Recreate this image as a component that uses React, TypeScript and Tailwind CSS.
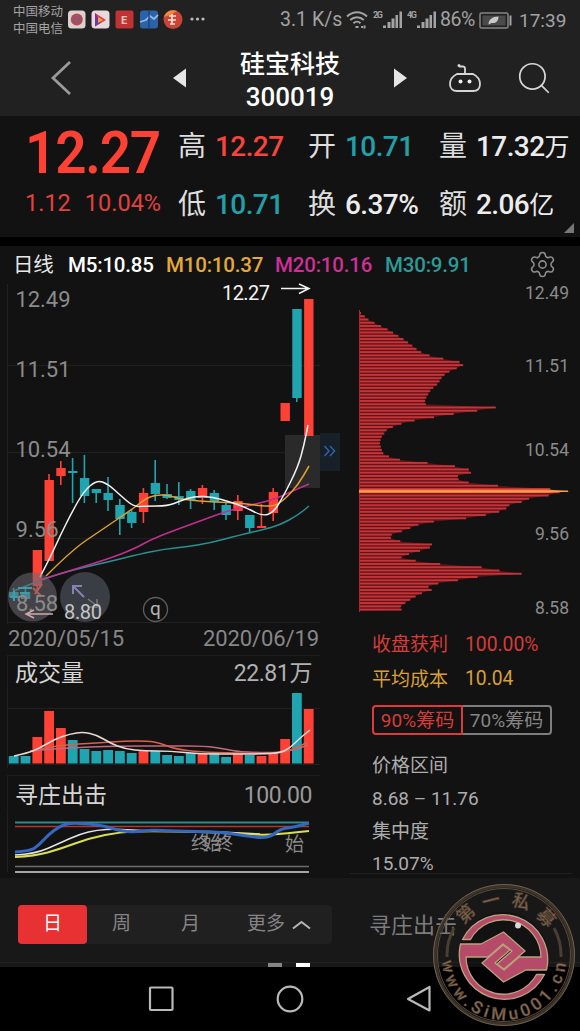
import { Search, Settings } from "lucide-react";

type Point = [number, number];

type Candle = {
    up: boolean;
    high: number;
    top: number;
    bottom: number;
    low: number;
    volume: number;
};

const RED = "#fd4135";
const TEAL = "#20a5b0";

const candles: Candle[] = [
    { up: false, high: 588, top: 592, bottom: 597, low: 600, volume: 756 },
    { up: false, high: 586, top: 592, bottom: 599, low: 602, volume: 756 },
    { up: true, high: 550, top: 550, bottom: 586, low: 590, volume: 737 },
    { up: true, high: 474, top: 480, bottom: 561, low: 561, volume: 711 },
    { up: true, high: 461, top: 468, bottom: 476, low: 485, volume: 728 },
    { up: false, high: 458, top: 471, bottom: 473, low: 503, volume: 740 },
    { up: false, high: 455, top: 478, bottom: 496, low: 503, volume: 749 },
    { up: false, high: 489, top: 489, bottom: 493, low: 503, volume: 751 },
    { up: false, high: 477, top: 493, bottom: 500, low: 511, volume: 750 },
    { up: false, high: 499, top: 505, bottom: 519, low: 535, volume: 751 },
    { up: false, high: 510, top: 512, bottom: 523, low: 528, volume: 753 },
    { up: true, high: 488, top: 493, bottom: 512, low: 523, volume: 751 },
    { up: false, high: 460, top: 483, bottom: 494, low: 501, volume: 751 },
    { up: false, high: 484, top: 494, bottom: 498, low: 499, volume: 755 },
    { up: false, high: 482, top: 496, bottom: 500, low: 505, volume: 756 },
    { up: false, high: 489, top: 491, bottom: 500, low: 509, volume: 753 },
    { up: true, high: 485, top: 488, bottom: 498, low: 504, volume: 754 },
    { up: false, high: 490, top: 493, bottom: 502, low: 510, volume: 753 },
    { up: false, high: 503, top: 505, bottom: 515, low: 520, volume: 757 },
    { up: true, high: 495, top: 501, bottom: 511, low: 520, volume: 753 },
    { up: false, high: 515, top: 515, bottom: 528, low: 532, volume: 755 },
    { up: true, high: 504, top: 526, bottom: 528, low: 528, volume: 756 },
    { up: true, high: 488, top: 492, bottom: 513, low: 521, volume: 752 },
    { up: true, high: 403, top: 403, bottom: 421, low: 421, volume: 739 },
    { up: false, high: 309, top: 309, bottom: 398, low: 402, volume: 693 },
    { up: true, high: 299, top: 299, bottom: 436, low: 436, volume: 709 },
];

const ma5: Point[] = [[40, 577], [50, 558], [60, 536], [72, 512], [84, 491], [97, 480], [108, 484], [120, 495], [134, 507], [145, 506], [168, 506], [180, 501], [195, 496], [213, 497], [230, 502], [245, 507], [262, 516], [273, 513], [283, 497], [298, 467], [304, 445], [308, 425]];
const ma10: Point[] = [[46, 576], [72, 550], [100, 531], [134, 508], [145, 499], [155, 495], [168, 495], [180, 499], [200, 501], [215, 502], [240, 503], [262, 506], [275, 506], [285, 499], [298, 485], [309, 466]];
const ma20: Point[] = [[40, 580], [72, 570], [108, 559], [134, 549], [150, 540], [170, 532], [200, 521], [230, 510], [260, 503], [275, 499], [295, 490], [309, 484]];
const ma30: Point[] = [[14, 591], [40, 580], [72, 570], [108, 562], [140, 554], [165, 549], [185, 547], [210, 543], [240, 535], [262, 530], [280, 525], [298, 515], [309, 506]];

const volWhite: Point[] = [[14, 756], [28, 753], [40, 748], [55, 739], [70, 734], [83, 732], [97, 735], [110, 743], [125, 749], [145, 751], [170, 751], [200, 754], [235, 754], [260, 754], [280, 753], [290, 748], [300, 738], [310, 730]];
const volOrange: Point[] = [[40, 749], [60, 745], [97, 743], [125, 741], [148, 741], [160, 743], [175, 749], [200, 752], [235, 753], [270, 754], [290, 751], [308, 742]];
const volPink: Point[] = [[30, 751], [60, 748], [120, 746], [170, 746], [205, 746], [225, 749], [240, 752], [280, 753], [300, 748], [308, 745]];

const indBlue: Point[] = [[15, 852], [30, 851], [38, 846], [48, 835], [60, 826], [70, 823], [90, 824], [105, 826], [120, 831], [135, 832], [150, 830], [175, 831], [220, 832], [240, 835], [262, 838], [272, 836], [280, 829], [295, 827], [309, 823]];
const indWhite: Point[] = [[15, 855], [35, 854], [60, 843], [80, 834], [97, 830], [115, 829], [150, 831], [200, 831], [260, 834]];
const indYellow: Point[] = [[15, 857], [35, 856], [60, 849], [90, 838], [120, 832], [150, 831], [200, 832], [225, 833], [260, 835], [280, 834], [309, 831]];

// [price axis y, right end of the chip bar]
const chipProfile: Point[] = [[313, 361], [320, 369], [330, 389], [340, 405], [350, 418], [354, 424], [358, 440], [362, 460], [366, 464], [370, 452], [376, 443], [384, 438], [390, 431], [400, 425], [405, 426], [407.500, 496], [411, 476], [414, 454], [418, 430], [421, 412], [425, 397], [430, 387], [438, 381], [444, 380], [453, 383], [457, 390], [460, 401], [463, 428], [466, 454], [470, 471], [473, 471], [476, 458], [479, 458], [482, 464], [486, 500], [490, 566], [495, 552], [499, 528], [502, 522], [506, 507], [510, 506], [513, 495], [516, 482], [519, 462], [522, 430], [526, 414], [530, 407], [534, 392], [538, 391], [541, 398], [544, 432], [547, 432], [551, 420], [556, 403], [558, 401], [561, 417], [564, 440], [567, 480], [571, 502], [574, 523], [577, 478], [580, 460], [583, 440], [587, 428], [590, 432], [594, 420], [600, 410], [606, 401], [612, 402]];

function chipEnd(y: number) {
    for (let i = 1; i < chipProfile.length; i++) {
        const [y0, x0] = chipProfile[i - 1];
        const [y1, x1] = chipProfile[i];
        if (y <= y1) return x0 + ((x1 - x0) * (y - y0)) / (y1 - y0);
    }
    return chipProfile[chipProfile.length - 1][1];
}

const chipRows = Array.from({ length: 92 }, (_, i) => 313 + i * 3.26);

const candleX = (i: number) => 13.6 + i * 11.8;

function smooth(points: Point[]) {
    let d = `M${points[0][0]} ${points[0][1]}`;
    for (let i = 1; i < points.length - 1; i++) {
        const [x, y] = points[i];
        const [nx, ny] = points[i + 1];
        d += ` Q${x} ${y} ${(x + nx) / 2} ${(y + ny) / 2}`;
    }
    const last = points[points.length - 1];
    return `${d} L${last[0]} ${last[1]}`;
}

function Curve({ points, color, width = 1.5 }: { points: Point[]; color: string; width?: number }) {
    return <path d={smooth(points)} fill="none" stroke={color} strokeWidth={width} strokeLinejoin="round" />;
}

function Signal({ label }: { label: string }) {
    return (
        <svg width="31" height="22" viewBox="0 0 31 22" fill="#a3a3a3">
            <text x="0" y="8.5" fontSize="9" fontWeight="700" textLength="10">
                {label}
            </text>
            <rect x="10" y="16.5" width="3" height="2.5" />
            <rect x="14.5" y="13" width="3" height="6" />
            <rect x="18.5" y="9.5" width="3" height="9.5" />
            <rect x="22.5" y="6" width="2.5" height="13" />
            <rect x="26.5" y="2.5" width="2.5" height="16.5" />
        </svg>
    );
}

function AppIcons() {
    return (
        <svg width="139" height="20" viewBox="67 10 139 20" className="ml-1">
            <rect x="68" y="10.5" width="17.5" height="18" rx="3.5" fill="#ddd0d0" />
            <circle cx="76.8" cy="19.5" r="6" fill="#b94a50" />
            <path d="M72 20c3-5 5 3 10-2M74 15v8M79 15v9" stroke="#7b5a80" strokeWidth="1.3" fill="none" />
            <rect x="91.5" y="10.5" width="18" height="18" rx="3.5" fill="#e8d9dd" />
            <path d="M95 13l11 7-11 6.5z" fill="#e23d4a" />
            <path d="M95 13v13.5l6-4z" fill="#6a3aa0" />
            <path d="M98 17l5 3-5 3z" fill="#f0a53a" />
            <rect x="115.500" y="10.5" width="18" height="18" rx="2" fill="#c03234" />
            <text x="121" y="24" fontSize="11" fontWeight="700" fill="#efc8b8">
                E
            </text>
            <rect x="140" y="10.5" width="18" height="18" rx="3" fill="#2b62a8" />
            <path d="M140 22l6-2 4-4 4 3 4-4" stroke="#8fb7e8" strokeWidth="1.8" fill="none" />
            <path d="M149 11v17" stroke="#1d4684" strokeWidth="1.500" />
            <circle cx="173" cy="19.5" r="9.5" fill="#cc4338" />
            <path d="M164 17a9.500 9.500 0 0 1 13-6l-5 3z" fill="#ee8d3c" />
            <path d="M169 16h7M168 20h8M170 24h5M172 14v10" stroke="#f5e3d8" strokeWidth="1.700" fill="none" />
            <circle cx="192" cy="19" r="1.600" fill="#bcbcbc" />
            <circle cx="197.500" cy="19" r="1.600" fill="#bcbcbc" />
            <circle cx="203" cy="19" r="1.600" fill="#bcbcbc" />
        </svg>
    );
}

function StatusBar() {
    return (
        <div className="flex h-10 items-center pl-[13px] text-[#a3a3a3]">
            <div className="flex w-[50px] flex-col whitespace-nowrap text-[12.5px] leading-[17px]">
                <span>中国移动</span>
                <span>中国电信</span>
            </div>
            <AppIcons />
            <span className="ml-[74px] w-[66px] whitespace-nowrap text-[19.5px] leading-none">3.1 K/s</span>
            <svg width="22" height="18" viewBox="0 0 22 18" fill="none" stroke="#a3a3a3" strokeWidth="2">
                <path d="M1 5.500C7-.2 15-.2 21 5.500M4.200 9c4-3.800 9.600-3.800 13.600 0M7.500 12.300c2-2 5-2 7 0" />
                <path d="M9.500 16h3M15 16h2M18.500 14.500v3" />
            </svg>
            <div className="ml-[5px] flex gap-[3px]">
                <Signal label="2G" />
                <Signal label="4G" />
            </div>
            <span className="ml-[2px] w-[39px] whitespace-nowrap text-[19.5px] leading-none tracking-[-0.5px]">86%</span>
            <svg width="34" height="17" viewBox="0 0 34 17" fill="none" className="shrink-0">
                <rect x="1" y="1" width="28" height="15" rx="1.500" stroke="#858585" strokeWidth="1.500" />
                <rect x="3.500" y="3.500" width="23" height="10" fill="#4a4a4a" />
                <path d="M9.500 12.500c0-5 4-8 10-8 0 5-3 7-7 6.500z" fill="#c9c9c9" />
                <path d="M31.500 3.500v10" stroke="#a3a3a3" strokeWidth="2" />
            </svg>
            <span className="ml-[6px] whitespace-nowrap text-[19px] leading-none">17:39</span>
        </div>
    );
}

function TitleBar() {
    return (
        <div className="flex h-[76px] items-center justify-between pl-[50px] pr-[27px]">
            <div className="flex items-center gap-[101px]">
                <svg width="22" height="36" viewBox="0 0 22 36" fill="none" stroke="#9a9a9a" strokeWidth="2.800">
                    <path d="M20 2L3 18l17 16" />
                </svg>
                <svg width="14" height="20" viewBox="0 0 14 20" fill="#e6e6e6">
                    <path d="M0 10L13 0.500v19z" />
                </svg>
            </div>
            <div className="flex flex-col items-center gap-[7px] pt-[5px] font-medium leading-none text-white">
                <span className="text-[25px]">硅宝科技</span>
                <span className="text-[26px]">300019</span>
            </div>
            <div className="flex items-center">
                <svg width="14" height="20" viewBox="0 0 14 20" fill="#e6e6e6">
                    <path d="M14 10L1 0.500v19z" />
                </svg>
                <svg width="34" height="30" viewBox="0 0 34 30" fill="none" stroke="#d6d6d6" strokeWidth="1.800" className="ml-[41px]">
                    <path d="M9 11h16c4 2 7 6 7 10 0 5-3 7-7 7H9c-4 0-7-2-7-7 0-4 3-8 7-10z" />
                    <path d="M17 11V5.500c0-1.500-1-2-2-2h-4" />
                    <circle cx="11" cy="2.500" r="1.500" fill="#d6d6d6" stroke="none" />
                    <circle cx="12.500" cy="18.500" r="2" fill="#f0f0f0" stroke="none" />
                    <circle cx="21.500" cy="18.500" r="2" fill="#f0f0f0" stroke="none" />
                </svg>
                <Search className="ml-[33px] size-[38px] text-[#d6d6d6]" strokeWidth={1.1} />
            </div>
        </div>
    );
}

const quotes = [
    { label: "高", value: "12.27", tone: "text-[#f5453d]" },
    { label: "开", value: "10.71", tone: "text-[#22a0aa]" },
    { label: "量", value: "17.32", unit: "万", tone: "text-[#ececec]" },
    { label: "低", value: "10.71", tone: "text-[#22a0aa]" },
    { label: "换", value: "6.37%", tone: "text-[#ececec]" },
    { label: "额", value: "2.06", unit: "亿", tone: "text-[#ececec]" },
];

function QuotePanel() {
    return (
        <div className="flex h-[121px] bg-[#121212] pt-[2px]">
            <div className="flex w-[178px] flex-col pl-[25px] text-[#fd4135]">
                <div className="flex h-[68px] items-center">
                    <span className="origin-left scale-x-[0.93] text-[59px] font-semibold leading-none tracking-[-1.3px]">12.27</span>
                </div>
                <div className="flex h-[36px] items-center gap-[14px] whitespace-nowrap text-[23.5px] leading-none text-[#e0433f]">
                    <span>1.12</span>
                    <span>10.04%</span>
                </div>
            </div>
            <div className="grid h-[116px] grid-cols-[130px_131px_141px] grid-rows-2">
                {quotes.map((q) => (
                    <div key={q.label} className="flex items-center gap-[9px] whitespace-nowrap leading-none">
                        <span className="text-[28px] text-[#dedede]">{q.label}</span>
                        <span className={`${q.tone} text-[28px] font-medium tracking-[-0.6px]`}>
                            {q.value}
                            {q.unit && <span className="text-[25px] font-normal">{q.unit}</span>}
                        </span>
                    </div>
                ))}
            </div>
            <svg width="10" height="10" viewBox="0 0 10 10" className="-ml-[16px] mb-[4px] self-end" fill="#777">
                <path d="M10 0v10H0z" />
            </svg>
        </div>
    );
}

function AverageRow() {
    return (
        <div className="flex h-[38px] items-center whitespace-nowrap bg-[#121212] pl-[13px] text-[20.5px] leading-none tracking-[-0.2px]">
            <span className="w-[55px] text-[#e8e8e8]">日线</span>
            <span className="w-[98px] font-medium text-white">M5:10.85</span>
            <span className="w-[109px] font-medium text-[#e5a93a]">M10:10.37</span>
            <span className="w-[110px] font-medium text-[#cf2f97]">M20:10.16</span>
            <span className="w-[143px] font-medium text-[#2d9a98]">M30:9.91</span>
            <Settings className="mb-[2px] size-[29px] text-[#8d8d8d]" strokeWidth={1.3} />
        </div>
    );
}

function PriceChart() {
    return (
        <svg width="350" height="342" viewBox="0 284 350 342" className="block overflow-visible">
            <g stroke="#202020">
                <path d="M7.500 284V624M7 365.500H320M7 452.500H320M7 538.500H320M7 622.500H320" />
            </g>
            <rect x="285" y="435" width="35" height="53" fill="#2a2a2a" />
            <rect x="320" y="433" width="20" height="38" fill="#172029" />
            <path d="M324.500 446l4.500 5-4.500 5M330 446l4.500 5-4.500 5" fill="none" stroke="#2e62a8" strokeWidth="1.500" />
            {candles.map((c, i) => (
                <g key={i} fill={c.up ? RED : TEAL}>
                    <rect x={candleX(i) - 0.8} y={c.high} width="1.6" height={c.low - c.high} />
                    <rect x={candleX(i) - 4.5} y={c.top} width="9.4" height={c.bottom - c.top} />
                </g>
            ))}
            <Curve points={ma30} color="#2b8f91" />
            <Curve points={ma20} color="#c32f90" />
            <Curve points={ma10} color="#dfa030" />
            <Curve points={ma5} color="#f2f2f2" />
            <g fill="#8b8b8b" fontSize="22">
                <text x="15.500" y="307" textLength="55">12.49</text>
                <text x="15.500" y="377" textLength="55">11.51</text>
                <text x="15.500" y="457" textLength="55">10.54</text>
                <text x="15.500" y="537" textLength="43">9.56</text>
            </g>
            <text x="222" y="300" fontSize="20" fill="#f2f2f2" textLength="48">
                12.27
            </text>
            <path d="M281 288.500H308M299 284l10 4.500-10 5" fill="none" stroke="#f2f2f2" strokeWidth="1.500" />
            <circle cx="32.500" cy="597" r="24.500" fill="#6f6a72" fillOpacity="0.55" />
            <circle cx="85" cy="597" r="25" fill="#59606e" fillOpacity="0.55" />
            <path d="M10 597h8M14 591v10M18 588h14M20 593h9" stroke="#3a9fac" strokeWidth="2" />
            <path d="M33 588l8 8M42 584l-7 10" stroke="#b0605c" strokeWidth="2" />
            <text x="16" y="611" fontSize="22" fill="#8b8b8b" textLength="42">
                8.58
            </text>
            <path d="M53 614H27M34 610l-8 4 8 4" fill="none" stroke="#cfa9a9" strokeWidth="1.500" />
            <path d="M73 594v-8h9M74 587l10 10" fill="none" stroke="#8583b3" strokeWidth="2" />
            <path d="M88 599l9 7M97 599v8h-8" fill="none" stroke="#77797f" strokeWidth="1.500" />
            <text x="64" y="619" fontSize="20" fill="#c5c5c5" textLength="38">
                8.80
            </text>
            <circle cx="155.500" cy="609.500" r="12" fill="none" stroke="#5c5c5c" strokeWidth="1.300" />
            <text x="155.500" y="614.500" fontSize="19" fill="#b5b5b5" textAnchor="middle">
                q
            </text>
        </svg>
    );
}

function VolumePanel() {
    return (
        <div className="mt-[4px]">
            <div className="ml-[7px] mr-[30px] flex h-[35px] items-center justify-between border-l border-t border-[#1e1e1e] pl-[7px] pr-[8px] text-[23px] leading-none">
                <span className="text-[#d5d5d5]">成交量</span>
                <span className="tracking-[-0.4px] text-[#b0b0b0]">22.81万</span>
            </div>
            <svg width="350" height="78" viewBox="0 690 350 78" className="block">
                <path d="M7.500 690V768M7 708.500H320M7 764.500H320" stroke="#202020" />
                {candles.map((c, i) => (
                    <rect key={i} x={candleX(i) - 4.8} y={c.volume} width="9.8" height={763.5 - c.volume} fill={c.up ? RED : TEAL} />
                ))}
                <Curve points={volPink} color="#c26a7c" />
                <Curve points={volOrange} color="#d9604b" />
                <Curve points={volWhite} color="#ead9d6" />
            </svg>
        </div>
    );
}

function IndicatorPanel() {
    return (
        <div className="mt-[7px]">
            <div className="ml-[7px] mr-[30px] flex h-[38px] items-center justify-between border-l border-t border-[#1e1e1e] pl-[7px] pr-[8px] pt-px text-[23px] leading-none">
                <span className="text-[#d5d5d5]">寻庄出击</span>
                <span className="tracking-[-0.4px] text-[#9a9a9a]">100.00</span>
            </div>
            <svg width="350" height="65" viewBox="0 813 350 65" className="block">
                <path d="M7.500 813V872" stroke="#202020" />
                <g fill="#8a8a8a" fontSize="19">
                    <text x="191" y="850">终</text>
                    <text x="203" y="850">始</text>
                    <text x="214" y="850">终</text>
                    <text x="285" y="851">始</text>
                </g>
                <path d="M15 822.500H309" stroke="#2a8c8c" strokeWidth="2" />
                <path d="M15 826.500H309" stroke="#b5352f" strokeWidth="1.500" />
                <Curve points={indWhite} color="#e4e4e4" />
                <Curve points={indYellow} color="#d9df4e" width={2} />
                <Curve points={indBlue} color="#3567c0" width={3} />
                <path d="M15 866.500H309" stroke="#6e6e6e" strokeWidth="1.500" />
                <path d="M15 872H309" stroke="#a9a4a4" strokeWidth="2" />
            </svg>
        </div>
    );
}

function ChipChart() {
    return (
        <svg width="228" height="342" viewBox="350 284 228 342" className="block">
            <path d={`M359 312${chipRows.map((y) => `L${chipEnd(y) - 1} ${y}`).join("")}L359 611z`} fill="#5e1519" />
            {chipRows.map((y) => (
                <rect key={y} x="359" y={y - 1} width={chipEnd(y) - 359} height="1.900" fill="#c63439" />
            ))}
            <path d="M359.500 310V612" stroke="#a82a2c" />
            <path d="M359 489.500H548l22 2-22 1.500H359z" fill="#f8743a" />
            <path d="M359 491.300H568" stroke="#f6a04a" strokeWidth="1.500" />
            <g fill="#8b8b8b" fontSize="17.5" textAnchor="end">
                <text x="569" y="299">12.49</text>
                <text x="569" y="372">11.51</text>
                <text x="569" y="456">10.54</text>
                <text x="569" y="540">9.56</text>
                <text x="569" y="614">8.58</text>
            </g>
        </svg>
    );
}

function ChipStats() {
    return (
        <div className="mr-[6px] grid h-[248px] grid-rows-[35px_34px_53px_33px_32px_34px_26px] border-b border-[#202020] pl-[22px] pt-px text-[19px] leading-none text-[#adadad]">
            <div className="flex items-center text-[#d63c38]">
                <span className="w-[93px]">收盘获利</span>
                <span className="text-[19.3px]">100.00%</span>
            </div>
            <div className="flex items-center text-[#d99f36]">
                <span className="w-[93px]">平均成本</span>
                <span className="text-[19.3px]">10.04</span>
            </div>
            <div className="mt-[9px] flex h-[30px] w-[180px] whitespace-nowrap">
                <div className="flex w-[91px] items-center justify-center rounded-l-[4px] border-2 border-[#dd3a39] text-[#d63c38]">
                    90%筹码
                </div>
                <div className="flex w-[89px] items-center justify-center rounded-r-[4px] border-2 border-l-0 border-[#7d7d7d] text-[#858585]">
                    70%筹码
                </div>
            </div>
            <div className="flex items-center">价格区间</div>
            <div className="flex items-center">8.68 – 11.76</div>
            <div className="flex items-center">集中度</div>
            <div className="flex items-center pt-[4px]">15.07%</div>
        </div>
    );
}

function PeriodBar() {
    return (
        <div className="flex h-[89px] flex-col bg-[#181818]">
            <div className="flex flex-1 items-center pl-[18px] pt-[9px]">
                <div className="flex h-[39px] w-[314px] items-center rounded bg-[#202020] text-[19px] text-[#858585]">
                    <div className="flex h-full w-[69px] items-center justify-center rounded bg-[#e83133] text-white">日</div>
                    <div className="w-[69px] text-center">周</div>
                    <div className="w-[69px] text-center">月</div>
                    <div className="flex flex-1 items-center gap-[7px] pl-[22px]">
                        更多
                        <svg width="19" height="10" viewBox="0 0 19 10" fill="none" stroke="#b5b5b5" strokeWidth="2">
                            <path d="M1 8.500l8.500-6.500 8.500 6.500" />
                        </svg>
                    </div>
                </div>
                <span className="ml-[37px] mt-[2px] text-[22px] leading-none text-[#7c7c7c]">寻庄出击</span>
            </div>
            <div className="flex h-[5px] gap-[14px] border-t border-[#222] pl-[268px]">
                <div className="w-[14px] bg-[#858585]" />
                <div className="w-[14px] bg-white" />
            </div>
        </div>
    );
}

function NavBar() {
    return (
        <div className="flex h-[64px] items-center bg-black pl-[148px]">
            <svg width="284" height="28" viewBox="148 985 284 28" fill="none" stroke="#b9b9b9" strokeWidth="2.200">
                <rect x="150" y="987.500" width="22.500" height="22.500" rx="1" />
                <circle cx="290" cy="999" r="12.300" />
                <path d="M429.500 987v23.500L408 999z" strokeLinejoin="round" />
            </svg>
        </div>
    );
}

// Half of the emblem: ring segment running into its arm. The other half is the same shape turned round.
const emblemHalf =
    "M462.5 939.5A45 45 0 0 1 546.5 970H526L503.5 982L482 963L503 945L510 950L495 963L504 970L519 957H541A37.5 37.5 0 0 0 470.5 939.5z";

function Watermark() {
    return (
        <svg
            width="144"
            height="146"
            viewBox="432 882 144 146"
            fill="none"
            className="absolute left-[432px] top-[882px]"
        >
            <circle cx="504" cy="955" r="69" stroke="#3c3329" strokeWidth="3.500" />
            <circle cx="504" cy="955" r="70.500" stroke="#6e5d4b" strokeWidth="1" />
            <circle cx="504" cy="955" r="66.500" stroke="#5c4d3e" strokeWidth="1" />
            <path d="M447 957a57 57 0 0 1 7-29M561 957a57 57 0 0 0-7-29" stroke="#4a3e33" strokeWidth="3" />
            <g fill="#84664e" stroke="#4d3d30" strokeWidth="0.600" fontSize="18" fontWeight="500" textAnchor="middle">
                <text transform="translate(466 914) rotate(-42)" y="6">第</text>
                <text transform="translate(491 901) rotate(-14)" y="6">一</text>
                <text transform="translate(521 902) rotate(17)" y="6">私</text>
                <text transform="translate(546 918) rotate(48)" y="6">募</text>
            </g>
            <path id="site" d="M442 958a62 62 0 0 0 124 0" />
            <text fill="#8b6e56" stroke="#53412f" strokeWidth="0.500" fontSize="17" fontWeight="500" textLength="186">
                <textPath href="#site" startOffset="3">www.SiMu001.cn</textPath>
            </text>
            <circle cx="503.500" cy="957" r="45" fill="#080808" fillOpacity="0.35" />
            <g fill="#b54b68" stroke="#b9a47d" strokeWidth="1.300" strokeLinejoin="round">
                <path d={emblemHalf} />
                <path d={emblemHalf} transform="rotate(180 503.5 957)" />
            </g>
            <circle cx="518" cy="925.500" r="3" fill="#d8d8d8" />
        </svg>
    );
}

export default function App() {
    return (
        <div className="relative flex h-[1031px] w-[580px] flex-col overflow-hidden bg-black font-['Roboto','Noto_Sans_CJK_SC',sans-serif]">
            <div className="bg-[#212121]">
                <StatusBar />
                <TitleBar />
            </div>
            <QuotePanel />
            <div className="h-[9px]" />
            <AverageRow />
            <div className="flex h-[594px] bg-[#121212]">
                <div className="w-[350px]">
                    <PriceChart />
                    <div className="flex h-[25px] w-[319px] items-center justify-between pl-[8px] text-[22px] leading-none tracking-[-0.1px] text-[#878787]">
                        <span>2020/05/15</span>
                        <span>2020/06/19</span>
                    </div>
                    <VolumePanel />
                    <IndicatorPanel />
                </div>
                <div className="w-[228px]">
                    <ChipChart />
                    <ChipStats />
                </div>
            </div>
            <PeriodBar />
            <NavBar />
            <Watermark />
        </div>
    );
}
